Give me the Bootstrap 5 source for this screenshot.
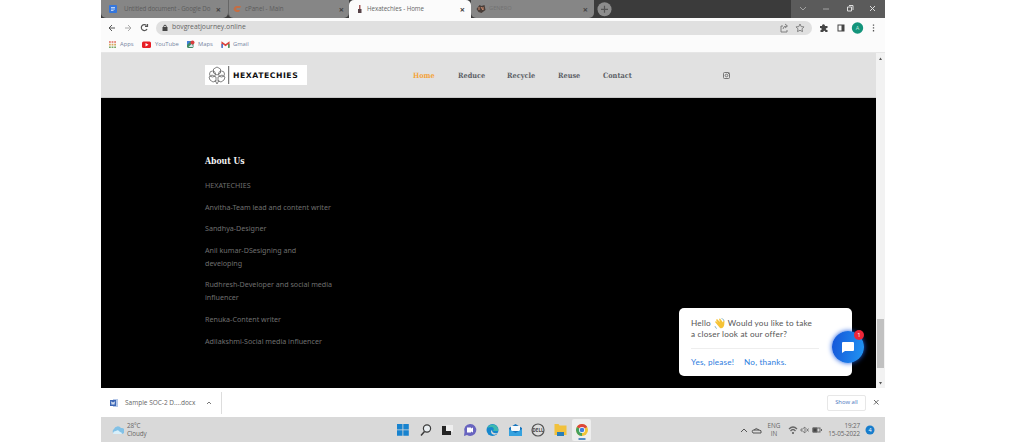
<!DOCTYPE html>
<html lang="en">
<head>
<meta charset="utf-8">
<meta name="viewport" content="width=device-width, initial-scale=1">
<title>Hexatechies - Home</title>
<link href="https://cdn.jsdelivr.net/npm/bootstrap@5.3.0/dist/css/bootstrap.min.css" rel="stylesheet">
<style>
body{background:#fff;font-family:"Open Sans","Noto Sans",sans-serif;font-size:6.5px;line-height:1;color:#666;overflow:hidden}
svg{display:block;flex:none}
.desktop{width:784px;height:442px;margin-left:101px}
.tabstrip{height:18px;background:#3b3b3b}
.tab{height:18px;background:#868686;color:#5c5c5c;padding:0 7px 0 8px;font-size:6.2px;border-radius:0 0 5px 5px}
.tab.on{background:#fbfbfb;color:#666;border-radius:5px 5px 0 0}
.tab b{font-size:9px;font-weight:700;color:#444}
.winbtns{width:94px;height:18px;background:#5b5b5b}
.toolbar{height:19px;background:#fbfbfb;padding-left:7px}
.omni{width:656px;height:14px;background:#e0e0e0;border-radius:7px;padding:0 4px 0 5px}
.url{margin-left:3px;font-size:6.8px}
.marks{height:16px;background:#fbfbfb;border-bottom:1px solid #e6e6e6;color:#74849f;font-size:5.8px;padding-left:7px}
.site{height:335px;background:#000}
.site-nav{height:45px;background:#e1e1e1;border-bottom:1px solid #c8c8c8;padding-left:104px}
.brand{width:102px;height:20px;background:#fff;padding-left:2px}
.brand span{font:700 7.7px "DejaVu Sans",sans-serif;color:#111;letter-spacing:.55px}
.menu{font:700 7.3px "DejaVu Serif Condensed","Liberation Serif",serif;color:#5c5f66;margin-left:106px}
.menu a{color:inherit;text-decoration:none;white-space:nowrap}
.menu a.on{color:#f3a43c}
.about{margin:57px 0 0 104px;width:140px;color:#6f6f6f;font-family:"Noto Sans","Open Sans",sans-serif;font-size:7.15px;line-height:13px}
.about h2{font:700 8.6px/12px "DejaVu Serif Condensed","Liberation Serif",serif;color:#f4f4f4;margin:0 0 12px}
.about p{margin:0 0 8.6px}
.scroller{width:9px;background:#f2f2f2}
.thumb{height:49px;width:7px;background:#c1c1c1;margin-top:257px}
.chat{left:578px;top:255px;width:173px;height:68px;background:#fff;border-radius:5px;padding:10px 12px;font:8.2px/11px Lato,sans-serif;letter-spacing:.18px;color:#555}
.chat hr{margin:8px 0 8px;width:128px;border-color:#bbb}
.chat .ans{color:#2e7de0}
.bubble{left:731px;top:278px;width:32px;height:32px;border-radius:50%;background:linear-gradient(100deg,#1554d8,#2196f3);box-shadow:0 0 5px #1c5be0}
.count{left:753px;top:277px;width:10px;height:10px;border-radius:50%;background:#ee2638;color:#fff;font-size:6px;line-height:10px}
.dl{height:29px;background:#fff;padding-left:9px}
.dlitem{width:112px;height:22px;border-right:1px solid #ddd}
.showall{width:39px;height:16px;border:1px solid #e7e7e7;border-radius:2px;color:#4b78c0;font-size:5.9px}
.taskbar{height:25px;background:#d9d9d9;padding-left:11px;font-size:6.3px;line-height:8px}
.chromeapp{width:19px;height:22px;background:#eee;border-radius:2px}
</style>
</head>
<body>
<main class="desktop d-flex flex-column">
<div class="tabstrip d-flex">
 <div class="tab d-flex align-items-center" style="width:127px"><svg width="8" height="10" viewBox="0 0 8 10"><rect y="1" width="8" height="8" rx="1" fill="#3476dc"/><path d="M2 3.500h4M2 5h4M2 6.500h2.500" stroke="#dce8fa" stroke-width=".8"/></svg><span class="text-nowrap" style="margin-left:7px;letter-spacing:-.11px">Untitled document - Google Do</span><b class="ms-auto">×</b></div>
 <div class="tab d-flex align-items-center" style="width:121px;border-left:1px solid #666;padding:0 5px 0 3px"><svg width="10" height="10"><path d="M4 2h5l-1 2H5q-2 1 0 2h3l-1 2H4Q-1 5 4 2" fill="#c46e44"/></svg><span style="margin-left:3px">cPanel - Main</span><b class="ms-auto">×</b></div>
 <div class="tab on d-flex align-items-center" style="width:122px;padding-right:6px"><svg width="6" height="10"><path d="M2 1h1.500v4H2z" fill="#a35d5c"/><path d="M1 5h3.500v4H1z" fill="#574348"/></svg><span style="margin-left:4px;letter-spacing:-.05px">Hexatechies - Home</span><b class="ms-auto">×</b></div>
 <div class="tab d-flex align-items-center" style="width:123px;padding-left:5px;padding-right:6px"><svg width="10" height="10"><path d="m3.500 1 2 1 3-1 1 5-4 3-3-1-2-3z" fill="#493e39"/><path d="M3 3v3m2-3 2 3M7 3v3" stroke="#cd8b6e"/></svg><span style="margin-left:3px;color:#727272;font-size:5.700px">GENERO</span><b class="ms-auto">×</b></div>
 <svg width="22" height="18"><circle cx="10.500" cy="9.300" r="7" fill="#8d8d8d"/><path d="M7 9.300h7M10.500 5.800v7" stroke="#555" stroke-width="1.200"/></svg>
 <div class="winbtns ms-auto"><svg width="94" height="18" fill="none" stroke="#ddd"><path d="m9 7 3 3 3-3M32 9h6" stroke="#aaa" stroke-width=".9"/><path d="M56.500 7h4v4h-4zM58 5.500h4V10"/><path d="m79 6 5 5m0-5-5 5"/></svg></div>
</div>
<div class="toolbar d-flex align-items-center">
 <svg width="48" height="14" fill="none" stroke="#555"><path d="M7 7H1m3-3L1 7l3 3"/><path d="M17 7h6m-3-3 3 3-3 3" stroke="#aaa"/><path d="M38.500 4.500a3 3 0 1 0 .5 3.500M39.500 3v2.500H37" stroke-width="1.200"/></svg>
 <div class="omni d-flex align-items-center"><svg width="8" height="10"><rect x="1.500" y="4" width="5" height="4" fill="#444"/><path d="M2.700 4.500v-1a1.300 1.300 0 0 1 2.600 0v1" fill="none" stroke="#444"/></svg><span class="url">bovgreatjourney.online</span>
 <svg class="ms-auto" width="34" height="14" fill="none" stroke="#777" stroke-width=".9"><path d="M9 5H7v6h6V9M9 8q0-3 4-3M11 3l2.500 2L11 7"/><path d="m26 3 1.200 2.600 2.800.3-2 2 .5 2.700L26 9.300l-2.500 1.300.5-2.700-2-2 2.800-.3z"/></svg></div>
 <svg width="72" height="14"><path d="M8 5h2q0-2 1.500-1.800T13 5h2.500v2q-1.800 0-1.800 1t1.800 1v2h-2.200q0-1.300-1-1.300t-1 1.300H8.500V9q1.300 0 1.300-1T8 7z" fill="#444"/><rect x="26" y="4" width="6" height="6" fill="none" stroke="#444"/><path d="M29.500 4H32v6h-2.500z" fill="#444"/><circle cx="45.500" cy="7" r="5.700" fill="#13947b"/><text x="45.500" y="9" font-size="5.500" fill="#c4e8df" text-anchor="middle">A</text><path d="M61.500 3.500v1.300m0 1.500v1.300m0 1.500v1.300" stroke="#555" stroke-width="1.300"/></svg>
</div>
<div class="marks d-flex align-items-center">
 <svg width="9" height="9"><path d="M1 2h7" stroke="#df695c" stroke-width="1.600" stroke-dasharray="1.800 .8"/><path d="M1 4.600h7" stroke="#d6a75d" stroke-width="1.600" stroke-dasharray="1.800 .8"/><path d="M1 7.200h7" stroke="#79a765" stroke-width="1.600" stroke-dasharray="1.800 .8"/></svg><span style="margin-left:3px;width:22px">Apps</span>
 <svg width="9" height="9"><rect y="1.500" width="9" height="6.500" rx="1.500" fill="#e71e25"/><path d="m3.500 3 3 1.800-3 1.800z" fill="#fff"/></svg><span style="margin-left:4px;width:31px">YouTube</span>
 <svg width="9" height="9"><rect x="1" y="1" width="6.500" height="7" rx="1.500" fill="#3d8a61"/><path d="M1 1h4L1 5z" fill="#437fda"/><path d="m2.500 7 3.500-3.500L7 7z" fill="#dae3ed"/><circle cx="6.500" cy="2.500" r="2" fill="#d93d3e"/></svg><span style="margin-left:3px;width:23px">Maps</span>
 <svg width="9" height="9"><path d="M1.200 7.500V2.800L4.500 5.200 7.800 2.800v4.700" fill="none" stroke="#db443c" stroke-width="1.500"/><path d="M1.200 4v4" stroke="#4780d6" stroke-width="1.500"/><path d="M7.800 4v4" stroke="#4b9b63" stroke-width="1.500"/></svg><span style="margin-left:3px">Gmail</span>
</div>
<section class="site d-flex position-relative">
 <div class="flex-grow-1">
  <nav class="site-nav d-flex align-items-center">
   <div class="brand d-flex align-items-center"><svg width="26" height="20" fill="none" stroke="#666" stroke-width=".8"><circle cx="5.500" cy="9" r="3"/><circle cx="14.500" cy="9" r="3"/><path d="m6.500 4 3.500-2 3.500 2v4l-3.500 2-3.500-2zM2 12l3-2 4 2v4l-3 1-3-2zM11 12l4-2 3 2-1 3-3 2-3-1zM8 15l2 4 2-4"/><path d="M21.700 1v18" stroke="#333"/></svg><span>HEXATECHIES</span></div>
   <div class="menu d-flex"><a class="on" href="#" style="width:45px">Home</a><a href="#" style="width:49px">Reduce</a><a href="#" style="width:51px">Recycle</a><a href="#" style="width:45px">Reuse</a><a href="#" style="width:119px">Contact</a></div>
   <svg width="9" height="9" fill="none" stroke="#777"><rect x="1.500" y="1.500" width="6" height="6" rx="1"/><circle cx="4.500" cy="4.500" r="1.300"/><path d="M6 2.500h1"/></svg>
  </nav>
  <div class="about"><h2>About Us</h2><p>HEXATECHIES</p><p>Anvitha-Team lead and content writer</p><p>Sandhya-Designer</p><p>Anil kumar-DSesigning and<br>developing</p><p>Rudhresh-Developer and social media influencer</p><p>Renuka-Content writer</p><p>Adilakshmi-Social media influencer</p></div>
 </div>
 <div class="scroller d-flex flex-column align-items-center"><svg width="9" height="9"><path d="m3 7 1.500-2.500L6 7z" fill="#555"/></svg><div class="thumb"></div><svg class="mt-auto" width="9" height="9"><path d="m3 3 1.500 2.500L6 3z" fill="#555"/></svg></div>
 <div class="chat position-absolute"><div class="d-flex text-nowrap"><span>Hello</span><svg style="margin:0 3px" width="11" height="11"><path d="m1 4 1-1 2 2-2-3 1-1 3 3-1-3 1-.5 3 4 .5-2 1 .5-.3 4Q9 11 6 10z" fill="#f6c335"/><path d="M7.500.5Q10 1 10 3M1 8q0 2 2 2.500" fill="none" stroke="#6fa3b5" stroke-width=".7"/></svg><span>Would you like to take</span></div><div>a closer look at our offer?</div><hr><div class="ans d-flex"><span style="width:53px">Yes, please!</span><span>No, thanks.</span></div></div>
 <div class="bubble position-absolute"><svg width="32" height="32"><path d="M11 11h10q1 0 1 1v7q0 1-1 1h-8l-3 2V12q0-1 1-1" fill="#fff"/></svg></div>
 <div class="count position-absolute text-center">1</div>
</section>
<div class="dl d-flex align-items-center">
 <div class="dlitem d-flex align-items-center"><svg width="9" height="10"><rect x="3" y="1" width="5" height="8" fill="#b6c8e8"/><rect y="2" width="6" height="6" fill="#3b66b5"/><path d="m1.300 3.500.8 3 .9-2.500.9 2.500.8-3" fill="none" stroke="#fff" stroke-width=".7"/></svg><span style="margin-left:6px;margin-top:2px">Sample SOC-2 D....docx</span><svg style="margin-left:10px" width="8" height="8"><path d="m2 5 2-2 2 2" fill="none" stroke="#777"/></svg></div>
 <div class="showall d-flex align-items-center justify-content-center" style="margin-left:605px">Show all</div><svg style="margin-left:6px" width="9" height="9"><path d="m2 2 4.500 4.500m0-4.500L2 6.500" stroke="#666"/></svg>
</div>
<div class="taskbar d-flex align-items-center">
 <svg width="12" height="14"><path d="M2 11a3 3 0 0 1 0-5 4 4 0 0 1 7-1 3 3 0 0 1 1 6z" fill="#82c1e6"/><path d="M1 11q0-3 3-3 2-2 4 1 2 0 2 2z" fill="#d8effa"/></svg>
 <div style="margin-left:3px;width:35px;letter-spacing:-.1px">28°C<br>Cloudy</div>
 <svg style="margin-left:233px" width="177" height="25">
  <path d="M2 7h5.500v5.500H2zM8.300 7h5.500v5.500H8.300zM2 13.300h5.500v5.500H2zM8.300 13.300h5.500v5.500H8.300z" fill="#1883cf"/>
  <circle cx="32" cy="11.500" r="3.600" fill="#e8edf0" stroke="#3b3b3b" stroke-width="1.200"/><path d="m29.500 14.500-3.500 4" stroke="#3b3b3b" stroke-width="1.500"/>
  <path d="M51 8h7v7h-7z" fill="#eee"/><path d="M47 9h4v5h5v4h-9z" fill="#242424"/>
  <path d="M75 7a6 6 0 1 1-3 11l-3 1 .5-4A6 6 0 0 1 75 7" fill="#6864bf"/><path d="M72 10.500h4v1l2-1v5l-2-1v1h-4z" fill="#fff"/>
  <circle cx="97.500" cy="13" r="6" fill="#1687cd"/><path d="M92 11q3-5 8-3 4 2 3 6h-5q2-3-1-4-3 0-5 1" fill="#3eb8ae"/><path d="M97 13q0 4 6 3-3 3-6 1-2-3 0-4" fill="#d9d9d9"/>
  <path d="m114 11 6.500-4 6.500 4v8h-13z" fill="#1474bd"/><path d="M116 9h9v5h-9z" fill="#f6f9fb"/><path d="m114 12 6.500 4 6.500-4v7h-13z" fill="#35a2df"/>
  <circle cx="143" cy="13" r="6" fill="#ddd" stroke="#555" stroke-width="1.200"/><text x="143" y="14.800" text-anchor="middle" font-size="4.500" font-weight="700" fill="#444">DELL</text>
  <path d="M159.500 7h4l1 1.500h7V18h-12z" fill="#f1c13c"/><path d="M162 15h7v4h-7z" fill="#287db8"/>
 </svg>
 <div class="chromeapp"><svg width="19" height="22"><circle cx="10" cy="11" r="6" fill="#f0c438"/><path d="M10 11 4.800 8a6 6 0 0 1 10.400 0z" fill="#dd463c"/><path d="M10 11 4.800 8a6 6 0 0 0 5.200 9z" fill="#45a160"/><circle cx="10" cy="11" r="3" fill="#fff"/><circle cx="10" cy="11" r="2.300" fill="#3f7fe0"/><path d="M6.500 20h7" stroke="#3f80bd" stroke-width="1.800"/></svg></div>
 <svg class="ms-auto" width="26" height="14" fill="none" stroke="#555"><path d="m3 9 3-3 3 3"/><path d="M15 10q-2-3 1-3 2-3 5 0 3 0 2 3zM16 7h5"/></svg>
 <div class="text-center" style="width:20px">ENG<br>IN</div>
 <svg style="margin-left:4px" width="39" height="14" fill="none" stroke="#666"><path d="M1 6q4-4 8 0M2.500 8q2.500-3 5 0" stroke-width="1.300"/><circle cx="5" cy="10" r=".7" fill="#555"/><path d="M13 6h1.500L17 4v6l-2.500-2H13zM18.500 5.500l2 3m0-3-2 3" stroke-width=".8"/><rect x="25" y="5" width="7" height="4"/><path d="M25 5h4v4h-4zM33.500 6v2" fill="#444"/></svg>
 <div class="text-end" style="width:33px;letter-spacing:-.12px">19:27<br>15-05-2022</div>
 <svg style="margin:0 10px 0 5px" width="10" height="10"><circle cx="5" cy="5" r="4.500" fill="#177dcc"/><text x="5" y="7" text-anchor="middle" font-size="5.500" fill="#fff">4</text></svg>
</div>
</main>
<script src="https://cdn.jsdelivr.net/npm/bootstrap@5.3.0/dist/js/bootstrap.bundle.min.js"></script>
</body>
</html>
